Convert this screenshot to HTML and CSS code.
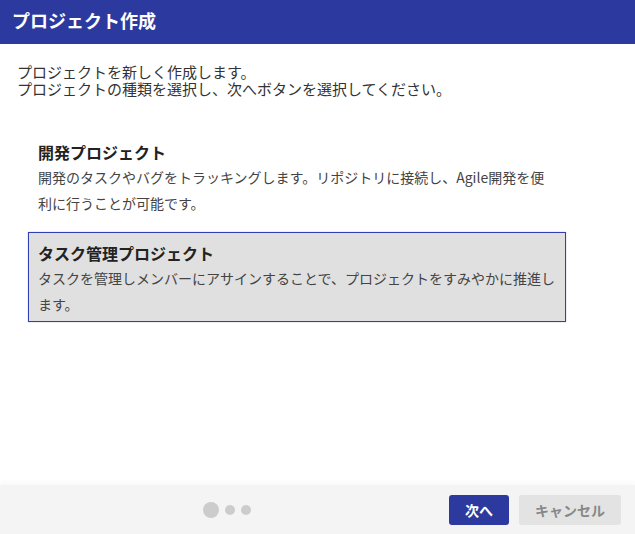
FILE: index.html
```html
<!DOCTYPE html>
<html lang="ja">
<head>
<meta charset="utf-8">
<title>プロジェクト作成</title>
<link rel="stylesheet" href="styles.css">
</head>
<body>
<div class="dialog">
  <header class="header">
    <h1 class="title">プロジェクト作成</h1>
  </header>
  <main class="content">
    <p class="intro"><span class="intro-line">プロジェクトを新しく作成します。</span><span class="intro-line">プロジェクトの種類を選択し、次へボタンを選択してください。</span></p>
    <div class="options">
      <div class="option">
        <div class="option-title">開発プロジェクト</div>
        <div class="option-desc">開発のタスクやバグをトラッキングします。リポジトリに接続し、Agile開発を便利に行うことが可能です。</div>
      </div>
      <div class="option selected">
        <div class="option-title">タスク管理プロジェクト</div>
        <div class="option-desc">タスクを管理しメンバーにアサインすることで、プロジェクトをすみやかに推進します。</div>
      </div>
    </div>
  </main>
  <footer class="footer">
    <div class="steps">
      <span class="dot active"></span>
      <span class="dot"></span>
      <span class="dot"></span>
    </div>
    <div class="actions">
      <button class="btn btn-primary">次へ</button>
      <button class="btn btn-secondary">キャンセル</button>
    </div>
  </footer>
</div>
</body>
</html>
```

FILE: styles.css
```css
* { box-sizing: border-box; }
html, body {
  margin: 0;
  padding: 0;
  background: #ffffff;
}
body {
  font-family: "Noto Sans CJK JP", "Noto Sans", "Liberation Sans", sans-serif;
  color: #333;
}
.dialog {
  width: 635px;
  height: 534px;
  display: flex;
  flex-direction: column;
  overflow: hidden;
}
.header {
  height: 44px;
  background: #2c3a9f;
  display: flex;
  align-items: center;
  padding: 0 12px;
  flex-shrink: 0;
}
.title {
  margin: 0;
  font-size: 18px;
  font-weight: 700;
  color: #ffffff;
  line-height: 24px;
  margin-top: -5px;
}
.content {
  flex: 1;
  padding: 20px 17px 0 17px;
}
.intro {
  margin: 0;
  font-size: 15px;
  color: #333;
  display: flex;
  flex-direction: column;
}
.intro-line {
  display: block;
  height: 16.5px;
  line-height: 16px;
}
.options {
  margin-top: 34px;
  padding-left: 11px;
  display: flex;
  flex-direction: column;
  gap: 11px;
  width: 549px;
}
.option {
  height: 90px;
  border: 1px solid transparent;
  padding: 8px 9px 4px 9px;
}
.option.selected {
  background: #e0e0e0;
  border-color: #3040b0;
  box-shadow: 0 0 1px rgba(48, 64, 176, 0.5);
}
.option-title {
  font-size: 16px;
  font-weight: 700;
  line-height: 24px;
  color: #222;
}
.option-desc {
  font-size: 14px;
  line-height: 26px;
  color: #444;
}
.footer {
  height: 49px;
  flex-shrink: 0;
  background: #f4f4f4;
  box-shadow: 0 -3px 5px rgba(0, 0, 0, 0.03);
  display: flex;
  align-items: center;
  padding: 0 14px 0 0;
}
.steps {
  flex: 1;
  display: flex;
  align-items: center;
  justify-content: center;
  gap: 6px;
  padding-left: 4px;
}
.dot {
  width: 10px;
  height: 10px;
  border-radius: 50%;
  background: #cccccc;
}
.dot.active {
  width: 16px;
  height: 16px;
}
.actions {
  display: flex;
  gap: 10px;
}
.btn {
  height: 30px;
  border: none;
  border-radius: 3px;
  font-family: inherit;
  font-size: 14px;
  font-weight: 700;
  padding: 0;
  line-height: 30px;
}
.btn-primary {
  width: 60px;
  background: #2c3a9f;
  color: #ffffff;
}
.btn-secondary {
  width: 102px;
  background: #e3e3e3;
  color: #888888;
}
```
